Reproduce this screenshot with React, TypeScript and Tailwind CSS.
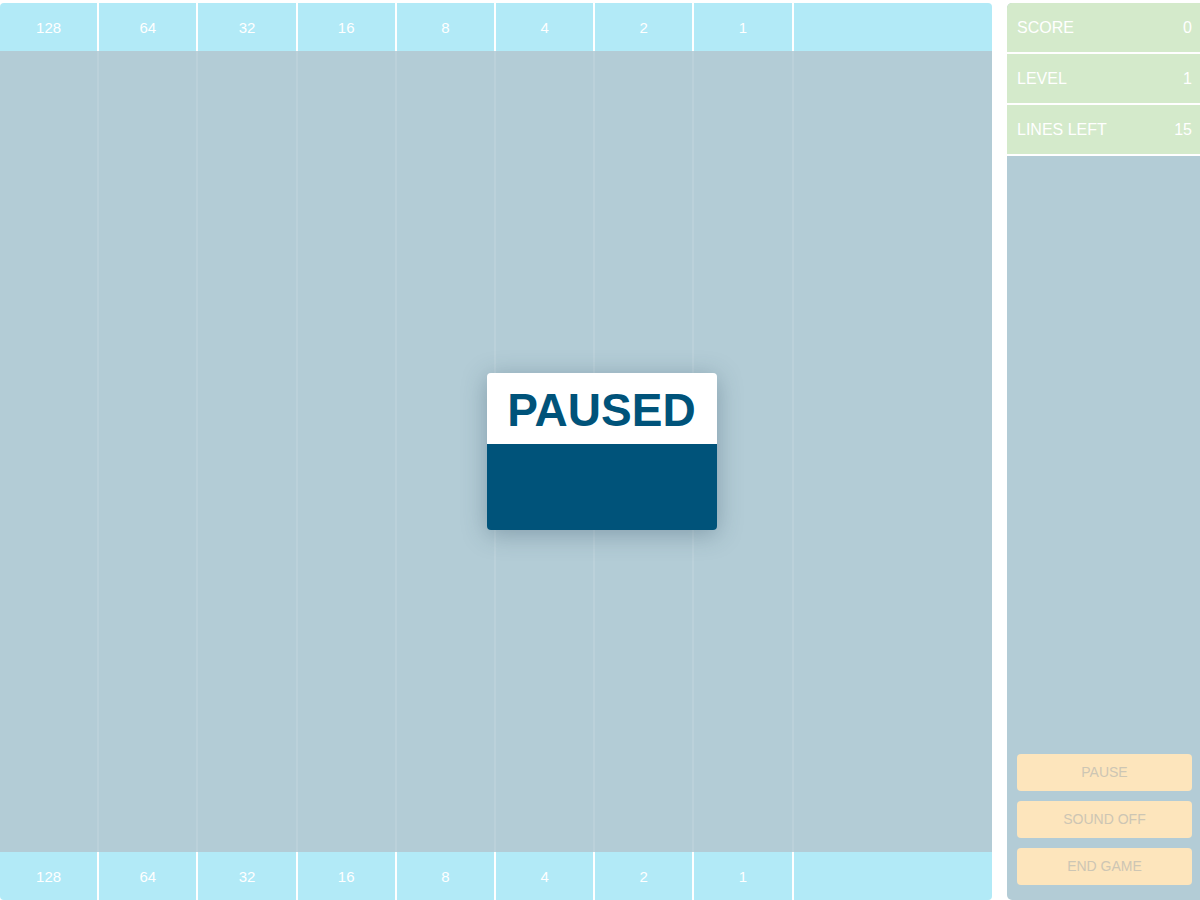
const bits = [128, 64, 32, 16, 8, 4, 2, 1];

const BitRow = ({ edge }: { edge: "top" | "bottom" }) => (
  <div
    className={`grid h-[48px] grid-cols-10 bg-[#b2eaf7] ${
      edge === "top" ? "rounded-t-[4px]" : "rounded-b-[4px]"
    }`}
  >
    {bits.map((b) => (
      <div
        key={b}
        className="flex items-center justify-center border-r-2 border-white pt-[2px] text-[15px] text-white"
      >
        {b}
      </div>
    ))}
    <div className="col-span-2" />
  </div>
);

const Stat = ({ label, value }: { label: string; value: string }) => (
  <div className="flex h-[51px] items-center justify-between border-b-2 border-white bg-[#d4eacb] pl-[10px] pr-[8px] text-[16px] text-white">
    <span>{label}</span>
    <span>{value}</span>
  </div>
);

const Button = ({ label }: { label: string }) => (
  <button className="flex h-[37px] w-full items-center justify-center rounded-[4px] bg-[#fde5bc] text-[14px] text-[#cdc6b4]">
    {label}
  </button>
);

export default function App() {
  return (
    <div
      className="relative flex h-[900px] w-[1200px] gap-[15px] overflow-hidden bg-white pt-[3px]"
      style={{ fontFamily: '"Liberation Sans", Arial, sans-serif' }}
    >
      <div className="flex w-[992px] flex-col">
        <BitRow edge="top" />
        <div className="grid flex-1 grid-cols-10 bg-[#b3ccd6]">
          {bits.map((b) => (
            <div key={b} className="border-r-2 border-white/10" />
          ))}
          <div className="col-span-2" />
        </div>
        <BitRow edge="bottom" />
      </div>

      <div className="flex flex-1 flex-col rounded-l-[5px] bg-[#b3ccd6]">
        <div className="overflow-hidden rounded-tl-[5px]">
          <Stat label="SCORE" value="0" />
          <Stat label="LEVEL" value="1" />
          <Stat label="LINES LEFT" value="15" />
        </div>
        <div className="mt-auto flex flex-col gap-[10px] pl-[10px] pr-[8px] pb-[15px]">
          <Button label="PAUSE" />
          <Button label="SOUND OFF" />
          <Button label="END GAME" />
        </div>
      </div>

      <div className="absolute inset-0 flex items-center justify-center pl-[3px] pt-[3px]">
        <div className="flex h-[157px] w-[230px] flex-col overflow-hidden rounded-[4px] shadow-[0_4px_24px_rgba(40,70,90,0.35)]">
          <div className="flex h-[71px] items-center justify-center bg-white pt-[3px] text-[46px] font-bold leading-none text-[#00537a]">
            PAUSED
          </div>
          <div className="flex-1 bg-[#00537a]" />
        </div>
      </div>
    </div>
  );
}
